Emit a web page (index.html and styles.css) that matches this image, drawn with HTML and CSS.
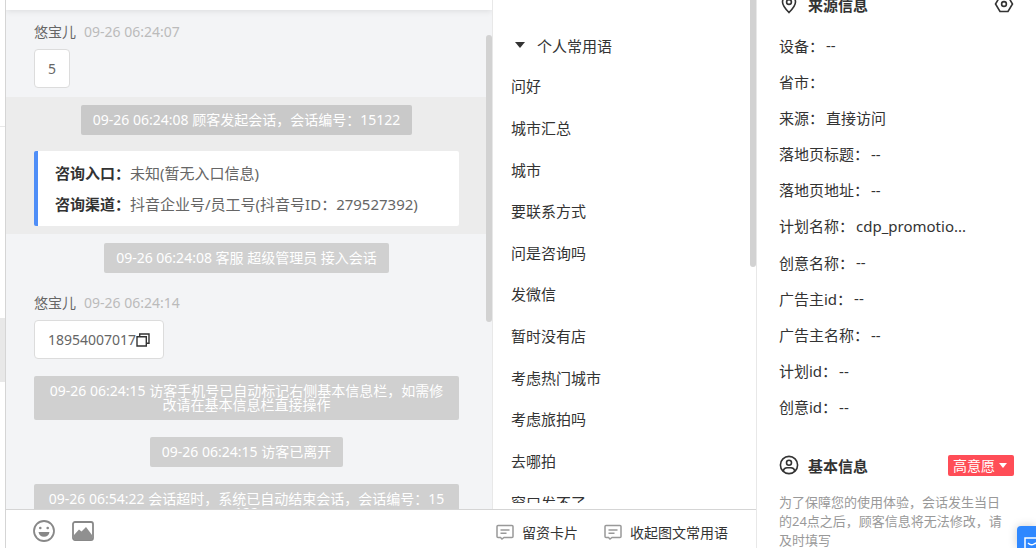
FILE: index.html
```
<!DOCTYPE html>
<html lang="zh-CN">
<head>
    <meta charset="UTF-8">
    <title>在线客服</title>
    <link rel="stylesheet" href="styles.css">
</head>
<body>
<div id="app">
    <!--会话列表边缘-->
    <div class="side">
        <div class="side_item"></div>
        <div class="side_item"></div>
        <div class="side_item active"></div>
    </div>

    <div class="main">
        <div class="content">
            <!--聊天窗口-->
            <div class="chat">
                <div class="chat_head"></div>
                <div class="chat_list">
                    <div class="msg">
                        <p class="msg_name">悠宝儿<span class="msg_time">09-26 06:24:07</span></p>
                        <div class="bubble">5</div>
                    </div>
                    <div class="session">
                        <p class="tip">09-26 06:24:08 顾客发起会话，会话编号：15122</p>
                        <div class="card">
                            <p><b>咨询入口：</b>未知(暂无入口信息)</p>
                            <p><b>咨询渠道：</b>抖音企业号/员工号(抖音号ID：279527392)</p>
                        </div>
                    </div>
                    <p class="tip">09-26 06:24:08 客服 超级管理员 接入会话</p>
                    <div class="msg">
                        <p class="msg_name">悠宝儿<span class="msg_time">09-26 06:24:14</span></p>
                        <div class="bubble">18954007017<button class="copy" type="button" aria-label="复制">
                            <svg width="14" height="14" viewBox="0 0 14 14" fill="none" stroke="#333" stroke-width="1.4"><path d="M1 3.7h9.3v9.300H1z"/><path d="M3.700 3.700V1H13v9.300h-2.700"/></svg>
                        </button></div>
                    </div>
                    <p class="tip wide">09-26 06:24:15 访客手机号已自动标记右侧基本信息栏，如需修<br>改请在基本信息栏直接操作</p>
                    <p class="tip">09-26 06:24:15 访客已离开</p>
                    <p class="tip wide">09-26 06:54:22 会话超时，系统已自动结束会话，会话编号：15<br>122</p>
                </div>
                <span class="bar"></span>
            </div>

            <!--常用语-->
            <div class="phrase">
                <div class="phrase_box">
                    <h3 class="phrase_title"><i class="arrow"></i>个人常用语</h3>
                    <ul class="phrase_list">
                        <li>问好</li>
                        <li>城市汇总</li>
                        <li>城市</li>
                        <li>要联系方式</li>
                        <li>问是咨询吗</li>
                        <li>发微信</li>
                        <li>暂时没有店</li>
                        <li>考虑热门城市</li>
                        <li>考虑旅拍吗</li>
                        <li>去哪拍</li>
                        <li>窗口发不了</li>
                    </ul>
                </div>
                <span class="bar"></span>
            </div>
        </div>

        <!--工具栏-->
        <div class="tools">
            <div class="tools_left">
                <button type="button" aria-label="表情">
                    <svg width="22" height="22" viewBox="0 0 22 22"><circle cx="11" cy="11" r="10" fill="none" stroke="#888" stroke-width="1.8"/><circle cx="7.3" cy="8" r="1.3" fill="#888"/><circle cx="14.7" cy="8" r="1.3" fill="#888"/><path d="M5.5 12h11c-.3 3-2.5 4.7-5.5 4.7S5.800 15 5.500 12z" fill="#888"/></svg>
                </button>
                <button type="button" aria-label="图片">
                    <svg width="22" height="20" viewBox="0 0 22 20"><rect x="1" y="1" width="20" height="18" rx="2" fill="none" stroke="#888" stroke-width="1.8"/><path d="M2 14l5-5.500 2.500 2L14 6l6 8v5H2z" fill="#909090"/></svg>
                </button>
            </div>
            <div class="tools_right">
                <button type="button">
                    <svg width="18" height="16" viewBox="0 0 18 16" fill="none" stroke="#999" stroke-width="1.500"><path d="M2 1.500h14q1 0 1 1v10q0 1-1 1H8l-2 1.500-1.500-1.500H2q-1 0-1-1v-10q0-1 1-1zM4.500 6h9M4.500 9.300h6"/></svg>留资卡片
                </button>
                <button type="button">
                    <svg width="18" height="16" viewBox="0 0 18 16" fill="none" stroke="#999" stroke-width="1.500"><path d="M2 1.500h14q1 0 1 1v10q0 1-1 1H8l-2 1.500-1.500-1.500H2q-1 0-1-1v-10q0-1 1-1zM4.500 6h9M4.500 9.300h6"/></svg>收起图文常用语
                </button>
            </div>
        </div>
    </div>

    <!--访客信息-->
    <div class="info">
        <div class="info_head">
            <svg width="20" height="20" viewBox="0 0 20 20" fill="none" stroke="#333" stroke-width="1.6"><path d="M10 18.500C6 14.500 3.500 11.500 3.500 8a6.500 6.500 0 0 1 13 0c0 3.500-2.500 6.500-6.500 10.500z"/><circle cx="10" cy="8" r="2.400"/></svg>
            <h3>来源信息</h3>
            <button class="setting" type="button" aria-label="设置">
                <svg width="20" height="20" viewBox="0 0 20 20" fill="none" stroke="#333" stroke-width="1.6"><path d="M6 2.500h8l4.500 7.500-4.500 7.500H6L1.500 10z"/><circle cx="10" cy="10" r="2.400"/></svg>
            </button>
        </div>
        <dl class="info_list">
            <div><dt>设备：</dt><dd>--</dd></div>
            <div><dt>省市：</dt><dd></dd></div>
            <div><dt>来源：</dt><dd>直接访问</dd></div>
            <div><dt>落地页标题：</dt><dd>--</dd></div>
            <div><dt>落地页地址：</dt><dd>--</dd></div>
            <div><dt>计划名称：</dt><dd>cdp_promotio...</dd></div>
            <div><dt>创意名称：</dt><dd>--</dd></div>
            <div><dt>广告主id：</dt><dd>--</dd></div>
            <div><dt>广告主名称：</dt><dd>--</dd></div>
            <div><dt>计划id：</dt><dd>--</dd></div>
            <div><dt>创意id：</dt><dd>--</dd></div>
        </dl>
        <div class="info_head">
            <svg width="20" height="20" viewBox="0 0 20 20" fill="none" stroke="#333" stroke-width="1.6"><circle cx="10" cy="10" r="8.600"/><circle cx="10" cy="7.800" r="2.500"/><path d="M4.200 16.200c.5-2.500 1.800-3.400 3.800-3.400h4c2 0 3.300.9 3.800 3.400"/></svg>
            <h3>基本信息</h3>
            <button class="tag" type="button">高意愿<i class="arrow"></i></button>
        </div>
        <p class="notice">为了保障您的使用体验，会话发生当日的24点之后，顾客信息将无法修改，请及时填写</p>
    </div>

    <button class="float_btn" type="button" aria-label="消息">
        <svg width="20" height="16" viewBox="0 0 20 16" fill="none" stroke="#fff" stroke-width="1.5"><path d="M1 1h18v14H1zM4 6q3 3 6 1t6 0"/></svg>
    </button>
</div>
</body>
</html>
```
FILE: styles.css
```
*{
    padding: 0;
    margin: 0;
    list-style: none;
    box-sizing: border-box;
}
body{
    font-family: "Noto Sans", "Noto Sans CJK SC", sans-serif;
    font-size: 15px;
    color: #333;
    background-color: #fff;
}
button{
    border: 0;
    background: none;
    font-family: inherit;
    color: inherit;
    cursor: pointer;
}
svg{
    display: block;
    flex: none;
}
#app{
    display: flex;
    height: 100vh;
    overflow: hidden;
    position: relative;
}

/*左侧*/
.side{
    width: 6px;
    flex: none;
    border-right: 1px solid #d5d5d5;
}
.side_item{
    height: 64px;
}
.side_item:first-child{
    height: 127px;
    border-bottom: 1px solid #e8e8e8;
}
.side_item:nth-child(2){
    height: 191px;
}
.side_item.active{
    background-color: #e8e8e8;
}

.main{
    flex: 1;
    min-width: 0;
    display: flex;
    flex-direction: column;
}
.content{
    flex: 1;
    min-height: 0;
    display: flex;
}

/*聊天*/
.chat{
    flex: 1;
    min-width: 0;
    display: flex;
    flex-direction: column;
    position: relative;
    background-color: #f3f4f6;
    overflow: hidden;
}
.chat_head{
    height: 10px;
    flex: none;
    background-color: #fff;
    box-shadow: 0 1px 6px rgba(0,0,0,.1);
}
.chat_list{
    font-size: 14px;
    display: flex;
    flex-direction: column;
    align-items: center;
    padding: 12px 33px 0 28px;
}
.msg{
    align-self: stretch;
}
.msg_name{
    line-height: 20px;
    margin-bottom: 7px;
    color: #666;
}
.msg_time{
    margin-left: 8px;
    color: #bbb;
}
.bubble{
    display: flex;
    align-items: center;
    width: fit-content;
    height: 39px;
    padding: 0 13px;
    border: 1px solid #dcdcdc;
    border-radius: 4px;
    background-color: #fff;
    color: #666;
}
.tip{
    flex: none;
    margin-bottom: 17px;
    padding: 8px 12px;
    line-height: 14px;
    border-radius: 2px;
    background-color: #d0d0d0;
    color: #fff;
    text-align: center;
}
.tip.wide{
    align-self: stretch;
    white-space: nowrap;
}
.session{
    align-self: stretch;
    display: flex;
    flex-direction: column;
    align-items: center;
    margin: 9px -33px 9px -28px;
    padding: 8px 33px 8px 28px;
    background-color: #ececec;
}
.session .tip{
    margin-bottom: 16px;
    background-color: #c9c9c9;
}
.card{
    align-self: stretch;
    height: 75px;
    padding: 7px 17px;
    border-left: 4px solid #4f8ef7;
    border-radius: 2px;
    background-color: #fff;
    font-size: 15px;
    line-height: 31px;
    color: #666;
    white-space: nowrap;
}
.card b{
    color: #333;
}
.chat_list > .msg + .tip{
    margin-top: 17px;
}
.chat_list > .tip + .msg{
    margin-top: 3px;
}
.bar{
    position: absolute;
    right: 0;
    top: 35px;
    width: 6px;
    height: 287px;
    border-radius: 3px;
    background-color: #d2d2d2;
}

/*常用语*/
.phrase{
    width: 264px;
    flex: none;
    padding-bottom: 6px;
    border-left: 1px solid #e8e8e8;
    position: relative;
    overflow: hidden;
}
.phrase .bar{
    top: -20px;
}
.phrase_box{
    height: 100%;
    padding: 25px 18px 0;
    overflow: hidden;
}
.phrase_title{
    display: flex;
    align-items: center;
    gap: 12px;
    height: 40px;
    padding-left: 4px;
    font-size: 15px;
    font-weight: normal;
}
.arrow{
    border: 5px solid transparent;
    border-top: 6px solid #333;
    border-bottom: 0;
}
.phrase_list{
    display: grid;
    grid-auto-rows: 1fr;
    align-items: center;
    height: 458px;
}

/*工具栏*/
.tools{
    display: flex;
    justify-content: space-between;
    height: 39px;
    flex: none;
    padding: 0 28px 0 27px;
    border-top: 1px solid #d5d5d5;
}
.tools_left, .tools_right{
    display: flex;
    align-items: center;
    gap: 17px;
}
.tools_left{
    padding-top: 3px;
}
.tools_right{
    gap: 26px;
    padding-top: 6px;
}
.tools_right button{
    display: flex;
    align-items: center;
    gap: 8px;
    font-size: 14px;
}

/*右侧信息*/
.info{
    width: 280px;
    flex: none;
    padding: 0 22px;
    border-left: 1px solid #e8e8e8;
}
.info_head{
    display: flex;
    align-items: center;
    gap: 9px;
    height: 24px;
}
.info_head:first-child{
    margin-top: -8px;
    margin-bottom: 11px;
}
.info_head h3{
    font-size: 15px;
}
.setting{
    margin-left: auto;
}
.info_list{
    display: grid;
    grid-auto-rows: 1fr;
    height: 398px;
    margin-bottom: 28px;
}
.info_list div{
    display: flex;
    align-items: center;
    gap: 2px;
}
.tag{
    display: flex;
    align-items: center;
    gap: 4px;
    height: 21px;
    margin-left: auto;
    padding: 0 7px 0 5px;
    border-radius: 2px;
    background-color: #ff4d57;
    color: #fff;
    font-size: 14px;
}
.tag .arrow{
    border-width: 4px;
    border-top: 5px solid #fff;
    border-bottom: 0;
}
.notice{
    margin-top: 16px;
    padding-right: 8px;
    font-size: 13px;
    line-height: 19px;
    color: #999;
}
.float_btn{
    position: absolute;
    right: 0;
    bottom: 0;
    width: 19px;
    height: 22px;
    padding: 11px 0 0 7px;
    border-radius: 4px 0 0 0;
    background-color: #2f88ff;
    box-shadow: 0 0 10px rgba(0,0,0,.2);
    overflow: hidden;
}
```
